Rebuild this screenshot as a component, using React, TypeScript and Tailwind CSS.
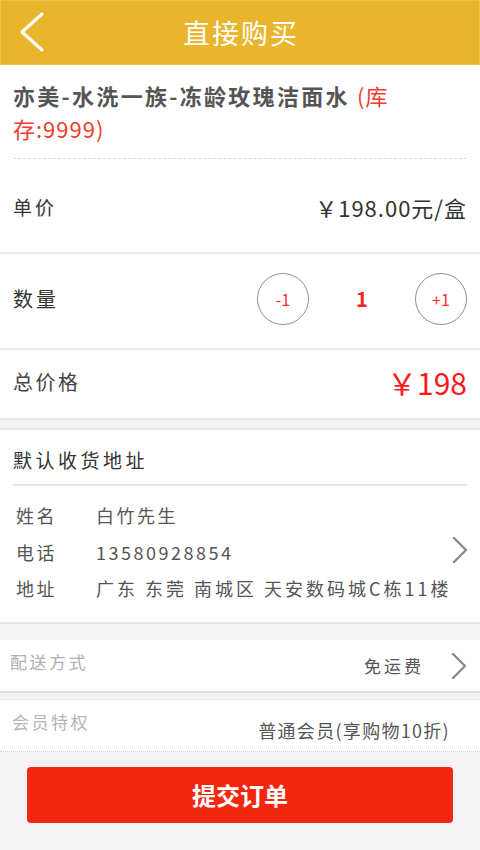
const font = { fontFamily: '"Noto Sans CJK SC", "Noto Sans", sans-serif' }

function Arrow() {
  return (
    <svg width="16" height="28" viewBox="0 0 16 28" className="shrink-0">
      <polyline points="2,2 14,14 2,26" fill="none" stroke="#8a8a8a" strokeWidth="2.4" strokeLinecap="round" strokeLinejoin="round" />
    </svg>
  )
}

export default function App() {
  return (
    <div className="w-[480px] h-[850px] bg-[#f3f3f3] flex flex-col overflow-hidden" style={font}>
      {/* 顶部栏 */}
      <div className="h-[65px] bg-[#e8b52d] border border-[#f0c246] flex items-center relative shrink-0">
        <svg width="30" height="42" viewBox="0 0 30 42" className="absolute left-[16px] top-[10px]">
          <polyline points="25,3 5,21 25,39" fill="none" stroke="#fff" strokeWidth="3.2" strokeLinecap="round" strokeLinejoin="round" />
        </svg>
        <h1 className="w-full text-center text-white text-[27px] tracking-[2px] leading-none pl-[2px]">直接购买</h1>
      </div>

      {/* 商品 + 单价 */}
      <div className="bg-white px-[13px] shrink-0">
        <div className="pt-[14px] pb-[13px] border-b border-dashed border-[#dcdcdc]">
          <div className="text-[22px] tracking-[2.3px] font-bold text-[#555] leading-[33px]">
            <div>
              亦美-水洗一族-冻龄玫瑰洁面水 <span className="font-normal tracking-[1px] text-[#f03c2c]">(库</span>
            </div>
            <div className="font-normal tracking-[1px] text-[#f03c2c]">存:9999)</div>
          </div>
        </div>
        <div className="h-[93px] flex items-center justify-between pt-[4px]">
          <span className="text-[19px] tracking-[3px] text-[#333]">单价</span>
          <span className="text-[22px] tracking-[1px] text-[#333]">￥198.00元/盒</span>
        </div>
      </div>

      {/* 数量 */}
      <div className="bg-white border-t-2 border-[#e9e9e9] h-[96px] px-[13px] pb-[4px] flex items-center justify-between shrink-0">
        <span className="text-[20px] tracking-[3px] text-[#333]">数量</span>
        <div className="flex items-center">
          <div className="w-[52px] h-[52px] rounded-full border border-[#8f8f8f] flex items-center justify-center text-[16px] text-[#ff2a2a]">-1</div>
          <div className="w-[106px] text-center text-[20px] font-bold text-[#ff2020]">1</div>
          <div className="w-[52px] h-[52px] rounded-full border border-[#8f8f8f] flex items-center justify-center text-[16px] text-[#ff2a2a]">+1</div>
        </div>
      </div>

      {/* 总价格 */}
      <div className="bg-white border-t-2 border-[#e9e9e9] h-[70px] px-[13px] flex items-center justify-between shrink-0">
        <span className="text-[20px] tracking-[2.5px] text-[#444] -mt-[4px]">总价格</span>
        <span className="text-[30px] text-[#ff1a1a] -mt-[4px]">￥198</span>
      </div>

      <div className="h-[10px] border-t-2 border-[#e6e6e6] shrink-0" />

      {/* 收货地址 */}
      <div className="bg-white border-t-2 border-[#e6e6e6] px-[13px] h-[194px] shrink-0">
        <div className="h-[56px] border-b-2 border-[#e6e6e6] flex items-center pt-[6px]">
          <span className="text-[19px] tracking-[3.5px] text-[#333]">默认收货地址</span>
        </div>
        <div className="flex items-center">
          <div className="flex-1 pt-[11px] text-[18px] tracking-[2.5px] text-[#555] leading-[36.5px] whitespace-nowrap">
            <div className="flex"><span className="w-[83px] pl-[3px]">姓名</span><span>白竹先生</span></div>
            <div className="flex"><span className="w-[83px] pl-[3px]">电话</span><span>13580928854</span></div>
            <div className="flex"><span className="w-[83px] pl-[3px]">地址</span><span className="tracking-[3px]">广东 东莞 南城区 天安数码城C栋11楼</span></div>
          </div>
          <div className="mt-[8px] -mr-[1px]"><Arrow /></div>
        </div>
      </div>

      <div className="h-[18px] border-t-2 border-[#e6e6e6] shrink-0" />

      {/* 配送方式 */}
      <div className="bg-white h-[53px] pl-[10px] pr-[13px] flex items-center justify-between border-b-2 border-[#dedede] shrink-0">
        <span className="text-[17px] tracking-[2.5px] text-[#b0b0b0] -mt-[8px]">配送方式</span>
        <div className="flex items-center">
          <span className="text-[17px] text-[#555] tracking-[3px] mr-[27px]">免运费</span>
          <Arrow />
        </div>
      </div>

      <div className="h-[7px] border-b border-[#e6e6e6] shrink-0" />

      {/* 会员特权 */}
      <div className="bg-white h-[52px] pl-[12px] pr-[30px] flex justify-between border-b border-dotted border-[#cfcfcf] shrink-0">
        <span className="text-[17px] tracking-[2.5px] text-[#b5b5b5] pt-[9px]">会员特权</span>
        <span className="text-[18px] tracking-[1.3px] text-[#555] pt-[17px]">普通会员(享购物10折)</span>
      </div>

      {/* 提交 */}
      <div className="flex-1 pt-[15px] px-[27px]">
        <button className="w-full h-[56px] bg-[#f2270f] rounded-[4px] text-white text-[24px] font-bold">
          提交订单
        </button>
      </div>
    </div>
  )
}
